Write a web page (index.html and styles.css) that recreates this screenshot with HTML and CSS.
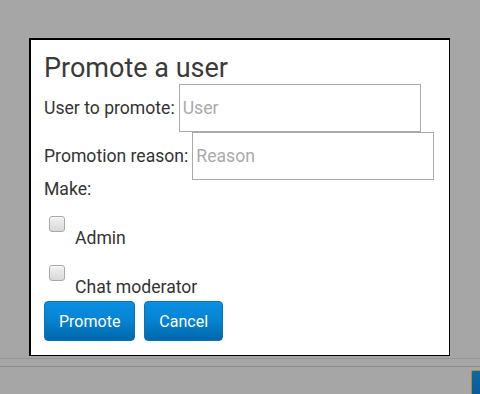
FILE: index.html
```html
<!DOCTYPE html>
<html lang="en">
<head>
    <meta charset="UTF-8">
    <meta name="viewport" content="width=device-width,initial-scale=1">
    <title>Promote a user</title>
    <link rel="stylesheet" href="styles.css">
</head>
<body>
    <div class="page">
        <div class="main"></div>
        <div class="toolbar">
            <div class="toolbar-row"></div>
            <div class="toolbar-actions">
                <span class="chat-btn"></span>
            </div>
        </div>
    </div>

    <div class="dialog">
        <h2>Promote a user</h2>
        <div class="field">
            <label for="user">User to promote:</label>
            <input type="text" id="user" placeholder="User">
        </div>
        <div class="field">
            <label for="reason">Promotion reason:</label>
            <input type="text" id="reason" placeholder="Reason">
        </div>
        <div class="make">Make:</div>
        <label class="option">
            <input type="checkbox" id="admin">
            <span>Admin</span>
        </label>
        <label class="option">
            <input type="checkbox" id="chatmod">
            <span>Chat moderator</span>
        </label>
        <div class="buttons">
            <button class="btn">Promote</button>
            <button class="btn">Cancel</button>
        </div>
    </div>
</body>
</html>
```

FILE: styles.css
```css
html, body {
    margin: 0;
    height: 100%;
    overflow: hidden;
}
body {
    font-family: Roboto, "Noto Sans", sans-serif;
    font-size: 17.6px;
    line-height: 19px;
    color: #333;
    background: #a6a6a6;
}
.main {
    height: 358px;
}
.toolbar {
    border-top: 1px solid #979797;
}
.toolbar-row {
    height: 7px;
    border-bottom: 1px solid #8c8c8c;
}
.toolbar-actions {
    display: flex;
    justify-content: flex-end;
    padding-top: 3px;
}
.chat-btn {
    display: block;
    width: 24px;
    height: 30px;
    margin-right: -17px;
    background: linear-gradient(#0c67a8, #075a96);
    border: 1px solid #b0883a;
    border-radius: 2px;
}

/* modal */
.dialog {
    position: absolute;
    top: 38px;
    left: 29px;
    width: 421px;
    box-sizing: border-box;
    background: white;
    border: 1px solid #000;
    border-width: 2px 1px 1px 2px;
    padding: 13px 13px 14px;
}
.dialog h2 {
    margin: 0;
    font-size: 27px;
    font-weight: normal;
    line-height: 31px;
    color: #3a3a3a;
}
.field {
    display: flex;
    align-items: center;
    gap: 4px;
}
.field input {
    width: 242px;
    height: 48px;
    box-sizing: border-box;
    border: 1px solid #aaa;
    border-radius: 0;
    padding: 0 3px;
    margin: 0;
    font-family: inherit;
    font-size: 17.6px;
    color: #333;
    outline: none;
}
.field input::placeholder {
    color: #aaa;
}
.make {
    margin-bottom: 1px;
}
.option {
    display: flex;
    align-items: flex-start;
    margin-top: 17px;
}
.option input {
    appearance: none;
    -webkit-appearance: none;
    width: 16px;
    height: 16px;
    margin: 0 10px 0 5px;
    box-sizing: border-box;
    border: 1px solid #a8a8a8;
    border-radius: 3px;
    background: linear-gradient(#f2f2f2, #d8d8d8);
    box-shadow: inset 0 1px 1px rgba(255,255,255,0.8);
}
.option span {
    padding-top: 13px;
}
.buttons {
    display: flex;
    gap: 9px;
    margin-top: 4px;
}
.btn {
    height: 40px;
    padding: 0 14px;
    border: 1px solid #0a72b8;
    border-radius: 4px;
    background: linear-gradient(#0a8fe2 0%, #0684d4 45%, #0067aa 100%);
    color: white;
    font-family: inherit;
    font-size: 16px;
}
```
